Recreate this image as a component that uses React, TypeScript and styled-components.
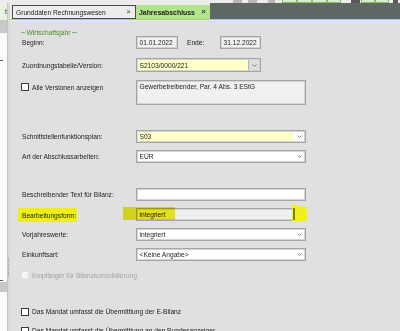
import React from 'react';
import styled, { createGlobalStyle } from 'styled-components';

const Global = createGlobalStyle`
  html, body { margin: 0; padding: 0; }
  body {
    background: #e0e0e0;
    font-family: 'Liberation Sans', Arial, sans-serif;
    font-size: 6.65px;
    color: #1c1c1c;
  }
  * { box-sizing: border-box; }
`;

const Window = styled.div`
  width: 400px;
  height: 331px;
  overflow: hidden;
  display: flex;
  flex-direction: column;
  background: #e0e0e0;
`;

const Toolbar = styled.div`
  height: 3px;
  flex: none;
  background: #ececec;
  display: flex;
  align-items: flex-start;
`;

const ToolButton = styled.div<{ $gap: number; $w: number; $kind: 'green' | 'dark' | 'gray' }>`
  margin-left: ${(p) => p.$gap}px;
  width: ${(p) => p.$w}px;
  height: 3px;
  background: ${(p) => (p.$kind === 'green' ? '#dfe8d6' : p.$kind === 'dark' ? '#5a5a5a' : '#b8b8b8')};
  border: ${(p) => (p.$kind === 'green' ? '1px solid #86c25a' : 'none')};
  border-top: none;
`;

const Body = styled.div`
  flex: 1;
  min-height: 0;
  display: flex;
`;

const Sidebar = styled.div`
  width: 7px;
  flex: none;
  background: #fbfbfb;
  display: flex;
  flex-direction: column;
`;

const SideTab = styled.div`
  height: 17px;
  background: #e9f2df;
  color: #333;
  font-size: 7px;
  text-align: right;
  padding-top: 6px;
  line-height: 6px;
`;

const SideBlock = styled.div<{ $top: number; $h: number }>`
  margin-top: ${(p) => p.$top}px;
  height: ${(p) => p.$h}px;
  background: #c8c8c8;
`;

const SideMark = styled.div<{ $top: number }>`
  margin-top: ${(p) => p.$top}px;
  width: 3px;
  height: 1px;
  background: #555;
`;

const Splitter = styled.div`
  width: 3px;
  flex: none;
  background: #d9d9d9;
  border-left: 1px solid #c4c4c4;
  display: flex;
  flex-direction: column;
`;

const Grip = styled.div`
  margin-top: 255px;
  height: 20px;
  width: 1px;
  background-image: repeating-linear-gradient(to bottom, #9a9a9a 0 1px, transparent 1px 2px);
`;

const Main = styled.div`
  flex: 1;
  min-width: 0;
  display: flex;
  flex-direction: column;
`;

const TabBar = styled.div`
  height: 16px;
  flex: none;
  display: flex;
  align-items: flex-end;
  background: #ececec;
  padding-left: 2px;
`;

const Tab = styled.div<{ $active?: boolean; $w: number }>`
  width: ${(p) => p.$w}px;
  height: 14px;
  display: flex;
  align-items: center;
  justify-content: space-between;
  padding: 0 4px 0 3px;
  background: ${(p) => (p.$active ? '#b3e48b' : '#ededed')};
  border: ${(p) => (p.$active ? 'none' : '1px solid #4a4a4a')};
  font-weight: ${(p) => (p.$active ? 700 : 400)};
  color: #1a1a1a;
  font-size: ${(p) => (p.$active ? '6.9px' : '6.65px')};
`;

const Close = styled.span`
  font-size: 8px;
  color: #444;
  line-height: 1;
`;

const TabFill = styled.div`
  flex: 1;
  height: 16px;
  background: #5e6862;
`;

const GreenLine = styled.div`
  height: 2px;
  flex: none;
  background: #a1d875;
  border-bottom: 1px solid #e8e8e8;
`;

const Content = styled.div`
  flex: 1;
  display: flex;
  flex-direction: column;
  padding-left: 12px;
`;

const GroupHeader = styled.div`
  margin-top: 7px;
  height: 8px;
  display: flex;
  align-items: center;
  margin-left: -1px;
`;

const GroupLine = styled.div<{ $w: number }>`
  width: ${(p) => p.$w}px;
  height: 1px;
  background: #8fa687;
`;

const GroupTitle = styled.span`
  color: #4f8a2d;
  margin: 0 1.5px;
`;

const Row = styled.div<{ $top: number; $h: number; $start?: boolean }>`
  margin-top: ${(p) => p.$top}px;
  height: ${(p) => p.$h}px;
  display: flex;
  align-items: ${(p) => (p.$start ? 'flex-start' : 'center')};
  flex: none;
`;

const Label = styled.div<{ $w?: number }>`
  width: ${(p) => p.$w ?? 114}px;
  flex: none;
  white-space: nowrap;
`;

const Marked = styled.span`
  background: #eeee1e;
  margin-left: -4px;
  padding: 3.5px 1px 3.5px 4px;
`;

const Field = styled.div<{ $w: number; $bg?: string }>`
  position: relative;
  width: ${(p) => p.$w}px;
  height: 100%;
  flex: none;
  display: flex;
  align-items: center;
  background: ${(p) => p.$bg ?? '#ffffff'};
  border: 1px solid #a4a4a4;
  box-shadow: inset 0 0 0 1px #d4d4d4;
  padding-left: 2.5px;
  white-space: nowrap;
`;

const AreaField = styled(Field)`
  align-items: flex-start;
  padding-top: 2px;
`;

const Value = styled.span`
  flex: 1;
  position: relative;
`;

const DropButton = styled.div<{ $bg?: string; $w: number }>`
  width: ${(p) => p.$w}px;
  align-self: stretch;
  margin: 1px 1px 1px 0;
  display: flex;
  align-items: center;
  justify-content: center;
  background: ${(p) => p.$bg ?? '#ffffff'};
  border-left: ${(p) => (p.$bg ? '1px solid #b4b4b4' : 'none')};
`;

const Chevron = () => (
  <svg width="5" height="3" viewBox="0 0 5 3">
    <path d="M0.5 0.5 L2.5 2.5 L4.5 0.5" fill="none" stroke="#6a6a6a" strokeWidth="0.8" />
  </svg>
);

const ValueMark = styled.div`
  position: absolute;
  left: -14px;
  top: -2px;
  width: 52px;
  height: 13px;
  background: #f0f020;
  mix-blend-mode: multiply;
`;

const ArrowMark = styled.div`
  position: absolute;
  left: 155px;
  top: -5px;
  width: 15px;
  height: 17px;
  background: #f0f020;
  clip-path: polygon(0 0, 100% 20%, 100% 100%, 0 100%);
`;

const ArrowMarkEdge = styled.div`
  position: absolute;
  left: 156px;
  top: -1px;
  width: 2px;
  height: 12px;
  background: #7e7e16;
`;

const Check = styled.div<{ $disabled?: boolean }>`
  width: 8px;
  height: 8px;
  flex: none;
  margin-left: -1px;
  margin-right: 3px;
  background: ${(p) => (p.$disabled ? '#f6f6f6' : '#ffffff')};
  border: 1px solid ${(p) => (p.$disabled ? '#e4e4e4' : '#3a3a3a')};
`;

const CheckText = styled.span<{ $disabled?: boolean }>`
  color: ${(p) => (p.$disabled ? '#a4a4a4' : '#1c1c1c')};
  white-space: nowrap;
`;

const CheckRow = styled.div<{ $top?: number }>`
  display: flex;
  align-items: center;
  margin-top: ${(p) => p.$top ?? 0}px;
  width: 114px;
  flex: none;
`;

const Inline = styled.div<{ $gap: number; $w: number }>`
  margin-left: ${(p) => p.$gap}px;
  width: ${(p) => p.$w}px;
  flex: none;
`;

const toolButtons: { gap: number; w: number; kind: 'green' | 'dark' | 'gray' }[] = [
  { gap: 233, w: 9, kind: 'gray' },
  { gap: 6, w: 9, kind: 'gray' },
  { gap: 11, w: 7, kind: 'gray' },
  { gap: 7, w: 15, kind: 'green' },
  { gap: 0, w: 15, kind: 'green' },
  { gap: 0, w: 15, kind: 'green' },
  { gap: 0, w: 14, kind: 'green' },
  { gap: 10, w: 9, kind: 'dark' },
  { gap: 1, w: 14, kind: 'green' },
  { gap: 0, w: 14, kind: 'green' },
  { gap: 4, w: 5, kind: 'dark' },
];

export default function App() {
  return (
    <>
      <Global />
      <Window>
        <Toolbar>
          {toolButtons.map((b, i) => (
            <ToolButton key={i} $gap={b.gap} $w={b.w} $kind={b.kind} />
          ))}
        </Toolbar>
        <Body>
          <Sidebar>
            <SideTab>t</SideTab>
            <SideBlock $top={0} $h={13} />
            <SideMark $top={27} />
            <SideMark $top={219} />
            <SideBlock $top={1} $h={10} />
          </Sidebar>
          <Splitter>
            <Grip />
          </Splitter>
          <Main>
            <TabBar>
              <Tab $w={124}>
                <span>Grunddaten Rechnungswesen</span>
                <Close>×</Close>
              </Tab>
              <Tab $w={74} $active>
                <span>Jahresabschluss</span>
                <Close>×</Close>
              </Tab>
              <TabFill />
            </TabBar>
            <GreenLine />
            <Content>
              <GroupHeader>
                <GroupLine $w={4} />
                <GroupTitle>Wirtschaftsjahr</GroupTitle>
                <GroupLine $w={5} />
              </GroupHeader>

              <Row $top={0} $h={13}>
                <Label>Beginn:</Label>
                <Field $w={42} $bg="#f2f2f2">01.01.2022</Field>
                <Inline $gap={9} $w={33}>Ende:</Inline>
                <Field $w={41} $bg="#f2f2f2">31.12.2022</Field>
              </Row>

              <Row $top={9} $h={14}>
                <Label>Zuordnungstabelle/Version:</Label>
                <Field $w={125} $bg="#ffffc8">
                  <Value>S2103/0000/221</Value>
                  <DropButton $w={11} $bg="#dedede">
                    <Chevron />
                  </DropButton>
                </Field>
              </Row>

              <Row $top={8} $h={25} $start>
                <CheckRow $top={3}>
                  <Check />
                  <CheckText>Alle Versionen anzeigen</CheckText>
                </CheckRow>
                <AreaField $w={170} $bg="#f0f0f0">
                  Gewerbetreibender, Par. 4 Abs. 3 EStG
                </AreaField>
              </Row>

              <Row $top={25} $h={13}>
                <Label>Schnittstellenfunktionsplan:</Label>
                <Field $w={170} $bg="#ffffcc">
                  <Value>S03</Value>
                  <DropButton $w={10}>
                    <Chevron />
                  </DropButton>
                </Field>
              </Row>

              <Row $top={7} $h={13}>
                <Label>Art der Abschlussarbeiten:</Label>
                <Field $w={170}>
                  <Value>EÜR</Value>
                  <DropButton $w={10}>
                    <Chevron />
                  </DropButton>
                </Field>
              </Row>

              <Row $top={25} $h={13}>
                <Label>Beschreibender Text für Bilanz:</Label>
                <Field $w={170} />
              </Row>

              <Row $top={7} $h={13}>
                <Label>
                  <Marked>Bearbeitungsform:</Marked>
                </Label>
                <Field $w={170} $bg="#efefef">
                  <Value>integriert</Value>
                  <DropButton $w={10} $bg="#efefef">
                    <Chevron />
                  </DropButton>
                  <ValueMark />
                  <ArrowMark />
                  <ArrowMarkEdge />
                </Field>
              </Row>

              <Row $top={7} $h={13}>
                <Label>Vorjahreswerte:</Label>
                <Field $w={170}>
                  <Value>integriert</Value>
                  <DropButton $w={10}>
                    <Chevron />
                  </DropButton>
                </Field>
              </Row>

              <Row $top={7} $h={13}>
                <Label>Einkunftsart:</Label>
                <Field $w={170}>
                  <Value>&lt;Keine Angabe&gt;</Value>
                  <DropButton $w={10}>
                    <Chevron />
                  </DropButton>
                </Field>
              </Row>

              <Row $top={10} $h={8}>
                <CheckRow>
                  <Check $disabled />
                  <CheckText $disabled>Empfänger für Bilanzkonsolidierung</CheckText>
                </CheckRow>
              </Row>

              <Row $top={28} $h={9}>
                <CheckRow>
                  <Check />
                  <CheckText>Das Mandat umfasst die Übermittlung der E-Bilanz</CheckText>
                </CheckRow>
              </Row>

              <Row $top={10} $h={9}>
                <CheckRow>
                  <Check />
                  <CheckText>Das Mandat umfasst die Übermittlung an den Bundesanzeiger</CheckText>
                </CheckRow>
              </Row>
            </Content>
          </Main>
        </Body>
      </Window>
    </>
  );
}
